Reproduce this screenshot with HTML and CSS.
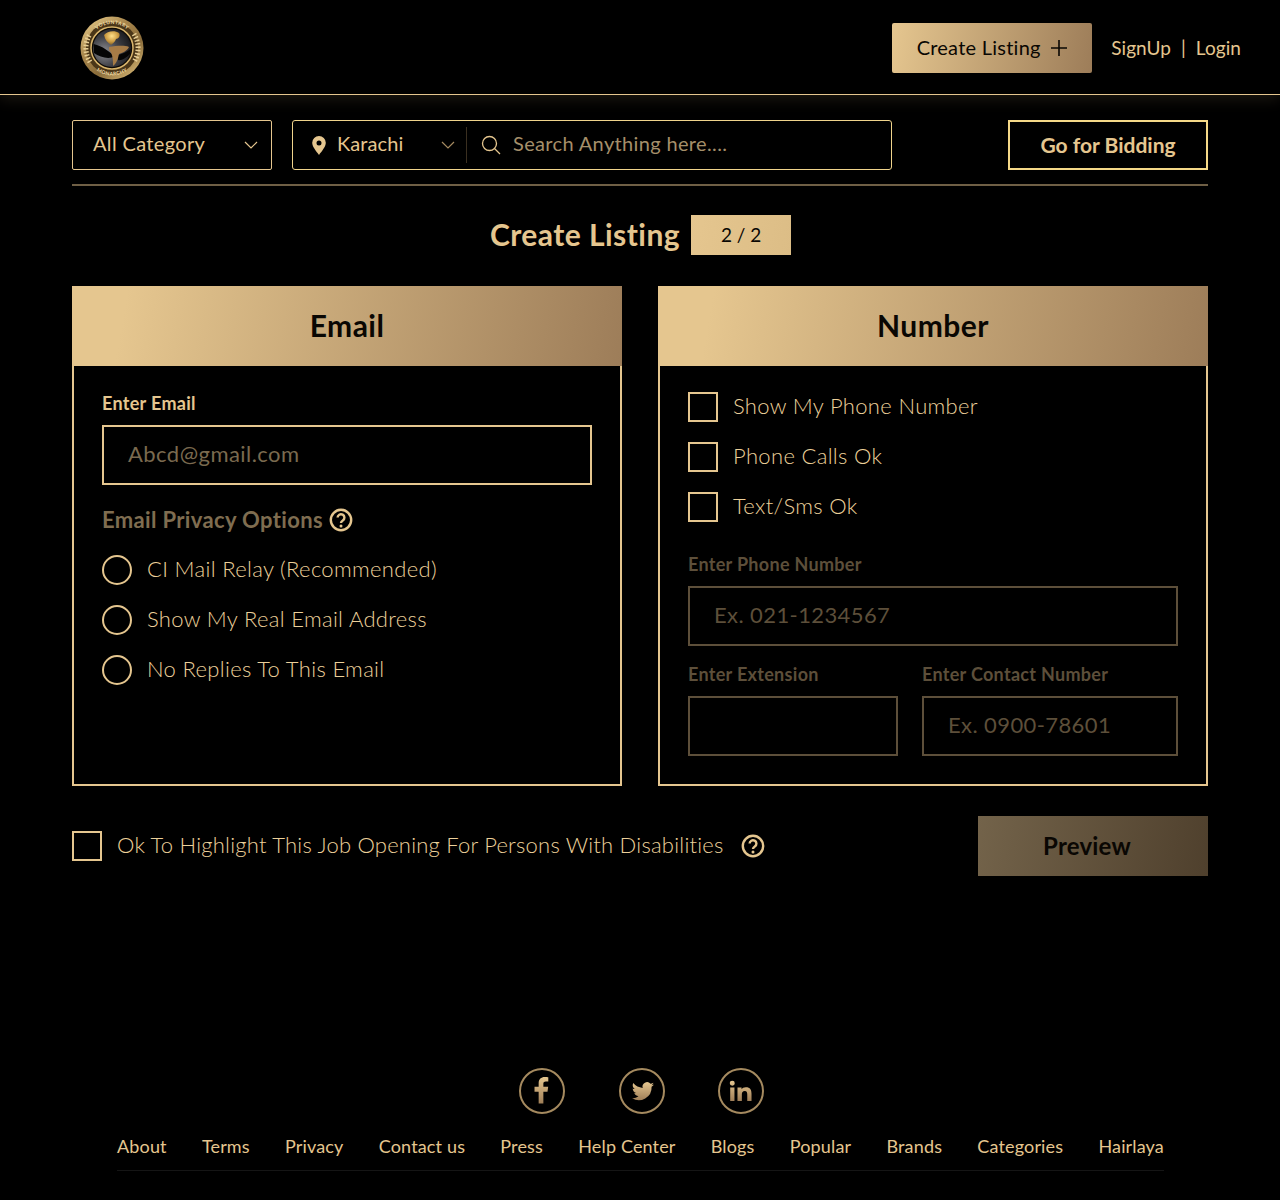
FILE: index.html
```html
<!DOCTYPE html>
<html lang="en">
<head>
    <meta charset="UTF-8">
    <meta name="viewport" content="width=device-width, initial-scale=1.0">
    <title>Create Listing</title>
    <link rel="stylesheet" href="styles.css">
</head>
<body>

    <svg class="svg-defs" width="0" height="0" aria-hidden="true">
        <defs>
            <linearGradient id="goldIcon" x1="0" y1="0" x2="0" y2="1">
                <stop offset="0" stop-color="#e5c68f"/>
                <stop offset="1" stop-color="#a07f58"/>
            </linearGradient>
            <linearGradient id="logoRing" x1="0.1" y1="0" x2="0.9" y2="1">
                <stop offset="0" stop-color="#e8cd8c"/>
                <stop offset="0.35" stop-color="#a8864c"/>
                <stop offset="0.65" stop-color="#8a6c3a"/>
                <stop offset="1" stop-color="#dfc07c"/>
            </linearGradient>
            <radialGradient id="logoGlobe" cx="0.3" cy="0.6" r="0.8">
                <stop offset="0" stop-color="#8c8c90"/>
                <stop offset="0.5" stop-color="#3e3f45"/>
                <stop offset="1" stop-color="#131316"/>
            </radialGradient>
            <radialGradient id="logoLand" cx="0.5" cy="0.35" r="0.7">
                <stop offset="0" stop-color="#ffe08a"/>
                <stop offset="0.6" stop-color="#c9983f"/>
                <stop offset="1" stop-color="#6d5226"/>
            </radialGradient>
            <path id="logoTop" d="M8 32a24 24 0 0 1 48 0"/>
            <path id="logoBottom" d="M4.500 32a27.500 27.500 0 0 0 55 0"/>
        </defs>
    </svg>

    <header class="top-bar">
        <svg class="logo" width="64" height="64" viewBox="0 0 64 64">
            <circle cx="32" cy="32" r="31.500" fill="url(#logoRing)"/>
            <circle cx="32" cy="32" r="26" fill="#4a3618"/>
            <path d="M10 46a26 26 0 0 1 0-28M54 18a26 26 0 0 1 0 28" fill="none" stroke="#e6cd94" stroke-width="5" stroke-dasharray="1.500 1.800"/>
            <text class="logo-text"><textPath href="#logoTop" startOffset="50%" text-anchor="middle">VOLUNTARY</textPath></text>
            <text class="logo-text"><textPath href="#logoBottom" startOffset="50%" text-anchor="middle">MONARCHY</textPath></text>
            <circle cx="32" cy="32" r="21" fill="#0e0a05" stroke="#d9b56c" stroke-width="1.500"/>
            <circle cx="32" cy="32" r="19" fill="url(#logoGlobe)"/>
            <path d="M13.500 28 C23 30 29 36 35 40 C29 44 20 41 14 37 Z" fill="#050505"/>
            <path d="M38 39 C42 38 47 36 50.500 33 L50 38 C46 42 41 45 38 44 Z" fill="#050505"/>
            <path d="M24 19 C27 15 35 14 39 17 C41 20 38 23 36 23 C35 26 33 27 31 29 C28 27 25 24 24 19 Z" fill="url(#logoLand)"/>
            <path d="M29 31 C36 30 44 29 49 31 C47 35 42 37 39 38 C38 43 36 48 33 50 C33 44 33 38 29 34 Z" fill="#a67b46"/>
        </svg>
        <div class="top-actions">
            <a href="#" class="create-btn">
                Create Listing
                <svg width="18" height="18" viewBox="0 0 18 18"><path d="M9 1v16M1 9h16" stroke="#0a0703" stroke-width="1.600" fill="none"/></svg>
            </a>
            <div class="auth-links">
                <a href="#">SignUp</a>
                <span>|</span>
                <a href="#">Login</a>
            </div>
        </div>
    </header>

    <main class="page">
        <div class="search-row">
            <div class="select-box">
                <span>All Category</span>
                <svg class="chevron" width="14" height="8" viewBox="0 0 14 8"><path d="M1 1l6 6 6-6" stroke="#e5c68f" stroke-width="1.200" fill="none"/></svg>
            </div>
            <div class="search-box">
                <svg class="pin" width="14" height="19" viewBox="0 0 14 19"><path fill-rule="evenodd" d="M7 0a6.800 6.800 0 0 1 6.800 6.800C13.800 11 9.500 15.500 7 19 4.500 15.500.2 11 .2 6.800A6.800 6.800 0 0 1 7 0zm0 4.400a2.500 2.500 0 1 0 0 5 2.500 2.500 0 0 0 0-5z" fill="#e5c68f"/></svg>
                <span class="city">Karachi</span>
                <svg class="chevron dim" width="14" height="8" viewBox="0 0 14 8"><path d="M1 1l6 6 6-6" stroke="#a58a60" stroke-width="1.200" fill="none"/></svg>
                <span class="search-divider"></span>
                <svg class="search-icon" width="20" height="20" viewBox="0 0 20 20"><circle cx="8.500" cy="8.500" r="7" stroke="#e5c68f" stroke-width="1.300" fill="none"/><path d="M13.500 13.500l5.500 5.500" stroke="#e5c68f" stroke-width="1.300"/></svg>
                <span class="search-text">Search Anything here....</span>
            </div>
            <a href="#" class="bidding-btn">Go for Bidding</a>
        </div>

        <div class="title-row">
            <h1>Create Listing</h1>
            <span class="step">2 / 2</span>
        </div>

        <div class="cards">
            <section class="card">
                <h2 class="card-head">Email</h2>
                <div class="card-body">
                    <label class="field-label">Enter Email</label>
                    <div class="input">Abcd@gmail.com</div>
                    <div class="privacy-title">
                        Email Privacy Options
                        <svg class="help" width="24" height="24" viewBox="0 0 24 24"><use href="#helpIcon"/></svg>
                    </div>
                    <div class="option"><span class="radio"></span><span class="opt-text">CI Mail Relay (Recommended)</span></div>
                    <div class="option"><span class="radio"></span><span class="opt-text">Show My Real Email Address</span></div>
                    <div class="option"><span class="radio"></span><span class="opt-text">No Replies To This Email</span></div>
                </div>
            </section>

            <section class="card">
                <h2 class="card-head">Number</h2>
                <div class="card-body number-body">
                    <div class="option"><span class="check"></span><span class="opt-text">Show My Phone Number</span></div>
                    <div class="option"><span class="check"></span><span class="opt-text">Phone Calls Ok</span></div>
                    <div class="option"><span class="check"></span><span class="opt-text">Text/Sms Ok</span></div>
                    <div class="disabled-fields">
                        <label class="field-label">Enter Phone Number</label>
                        <div class="input">Ex. 021-1234567</div>
                        <div class="field-pair">
                            <div class="ext-field">
                                <label class="field-label">Enter Extension</label>
                                <div class="input"></div>
                            </div>
                            <div class="contact-field">
                                <label class="field-label">Enter Contact Number</label>
                                <div class="input">Ex. 0900-78601</div>
                            </div>
                        </div>
                    </div>
                </div>
            </section>
        </div>

        <div class="bottom-row">
            <div class="option highlight">
                <span class="check"></span>
                <span class="opt-text">Ok To Highlight This Job Opening For Persons With Disabilities</span>
                <svg class="help" width="24" height="24" viewBox="0 0 24 24">
                    <g id="helpIcon">
                        <circle cx="12" cy="12" r="10.200" stroke="#e5c68f" stroke-width="2.400" fill="none"/>
                        <path d="M8.600 9.600a3.400 3.400 0 1 1 5.200 2.900c-1.200.8-1.800 1.300-1.800 2.500" stroke="#e5c68f" stroke-width="2.400" fill="none"/>
                        <circle cx="12" cy="17.900" r="1.500" fill="#e5c68f"/>
                    </g>
                </svg>
            </div>
            <a href="#" class="preview-btn">Preview</a>
        </div>
    </main>

    <footer class="footer">
        <div class="socials">
            <a href="#" class="social">
                <svg width="46" height="46" viewBox="0 0 46 46"><path transform="translate(-4.200 -3.800) scale(1.120)" d="M25.500 35V24.500h3.700l.6-4.300h-4.300v-2.700c0-1.300.4-2.100 2.200-2.100h2.200v-3.800c-.5-.1-1.800-.2-3.200-.2-3.200 0-5.400 1.900-5.400 5.500v3.300h-3.700v4.300h3.700V35z" fill="url(#goldIcon)"/></svg>
            </a>
            <a href="#" class="social">
                <svg width="46" height="46" viewBox="0 0 46 46"><path transform="translate(1 1)" d="M34 15.500c-.8.400-1.700.6-2.600.7.900-.6 1.700-1.400 2-2.500-.9.500-1.900.9-2.900 1.100a4.500 4.500 0 0 0-7.800 4.100c-3.800-.2-7.100-2-9.400-4.800-1.200 2.100-.6 4.700 1.400 6-.7 0-1.400-.2-2-.6 0 2.200 1.500 4.100 3.600 4.500-.7.200-1.400.2-2 .1.600 1.800 2.300 3.100 4.200 3.100-1.900 1.500-4.200 2.100-6.600 1.900a12.800 12.800 0 0 0 19.700-11.400c.9-.6 1.700-1.400 2.400-2.200z" fill="url(#goldIcon)"/></svg>
            </a>
            <a href="#" class="social">
                <svg width="46" height="46" viewBox="0 0 46 46"><path transform="translate(-0.800 -0.800) scale(1.040)" d="M12.500 19.500h4.100v13h-4.100zM14.500 13a2.400 2.400 0 1 1 0 4.800 2.400 2.400 0 0 1 0-4.800zM19.500 19.500h3.900v1.800c.7-1.200 2.200-2.100 4.200-2.100 4.100 0 5.400 2.500 5.400 6.300v7h-4.100v-6.300c0-1.700-.4-3.400-2.400-3.400s-2.800 1.500-2.800 3.300v6.400h-4.200z" fill="url(#goldIcon)"/></svg>
            </a>
        </div>
        <nav class="footer-links">
            <a href="#">About</a>
            <a href="#">Terms</a>
            <a href="#">Privacy</a>
            <a href="#">Contact us</a>
            <a href="#">Press</a>
            <a href="#">Help Center</a>
            <a href="#">Blogs</a>
            <a href="#">Popular</a>
            <a href="#">Brands</a>
            <a href="#">Categories</a>
            <a href="#">Hairlaya</a>
        </nav>
    </footer>

</body>
</html>
```

FILE: styles.css
```css
/* General Styling */
* {
    box-sizing: border-box;
}

body {
    margin: 0;
    height: 1200px;
    background: #000;
    color: #e5c68f;
    font-family: 'Lato', 'Noto Sans', sans-serif;
    overflow: hidden;
}

a {
    color: inherit;
    text-decoration: none;
}

.svg-defs {
    position: absolute;
}

/* Header */
.top-bar {
    height: 95px;
    padding: 0 39px 0 80px;
    display: flex;
    align-items: center;
    justify-content: space-between;
    border-bottom: 1px solid #e5c68f;
    box-shadow: 0 4px 14px rgba(229, 198, 143, 0.12);
}

.logo {
    margin-top: 1px;
}

.logo-text {
    fill: #f0dca6;
    font-size: 5px;
    font-weight: 700;
    letter-spacing: 0.400px;
}

.top-actions {
    display: flex;
    align-items: center;
    gap: 19px;
    margin-top: 2px;
}

.create-btn {
    width: 200px;
    height: 50px;
    padding-bottom: 2px;
    display: flex;
    align-items: center;
    justify-content: center;
    gap: 9px;
    border-radius: 2px;
    background: linear-gradient(100deg, #e5c68f, #9d7d59);
    color: #0a0703;
    font-size: 20px;
    letter-spacing: 0.250px;
}

.create-btn svg {
    margin-top: 2px;
}

.auth-links {
    padding-bottom: 2px;
    display: flex;
    gap: 10px;
    font-size: 19px;
    letter-spacing: 0.080px;
}

/* Search row */
.page {
    padding: 0 72px;
}

.search-row {
    margin-top: 25px;
    padding-bottom: 14px;
    display: flex;
    border-bottom: 2px solid #6f5f45;
}

.select-box {
    width: 200px;
    height: 50px;
    padding: 0 13px 0 20px;
    display: flex;
    align-items: center;
    justify-content: space-between;
    border: 1px solid #e5c68f;
    border-radius: 2px;
    font-size: 20px;
    letter-spacing: 0.350px;
}

.select-box span,
.search-box span {
    margin-bottom: 4px;
}

.search-box {
    width: 600px;
    height: 50px;
    margin-left: 20px;
    padding-left: 19px;
    display: flex;
    align-items: center;
    border: 1px solid #f0d48c;
    border-radius: 3px;
    font-size: 20px;
}

.city {
    width: 104px;
    margin-left: 11px;
    letter-spacing: 0.100px;
}

.search-box .search-divider {
    width: 1px;
    height: 36px;
    margin: 0 0 0 11px;
    background: #3a2f20;
}

.search-icon {
    margin-left: 14px;
}

.search-text {
    margin-left: 12px;
    color: #a58f6a;
    letter-spacing: 0.350px;
}

.bidding-btn {
    width: 200px;
    height: 50px;
    margin-left: auto;
    padding-bottom: 2px;
    display: flex;
    align-items: center;
    justify-content: center;
    border: 2px solid #f5d988;
    font-size: 21px;
    font-weight: 700;
}

/* Title */
.title-row {
    margin-top: 29px;
    padding-left: 1px;
    display: flex;
    align-items: center;
    justify-content: center;
    gap: 11px;
}

h1 {
    margin: 0 0 2px;
    font-size: 30px;
    font-weight: 700;
    letter-spacing: 0.450px;
}

.step {
    width: 100px;
    height: 40px;
    padding-bottom: 2px;
    display: flex;
    align-items: center;
    justify-content: center;
    background: linear-gradient(100deg, #e5c68f, #dcbd86);
    color: #0a0703;
    font-size: 19px;
}

/* Cards */
.cards {
    margin-top: 31px;
    display: flex;
    justify-content: space-between;
}

.card {
    width: 550px;
    height: 500px;
    border: 2px solid #e5c68f;
    border-top: 0;
}

.card-head {
    height: 80px;
    margin: 0 -2px;
    padding-bottom: 2px;
    display: flex;
    align-items: center;
    justify-content: center;
    background: linear-gradient(100deg, #e5c68f 10%, #9d7d59);
    color: #0a0703;
    font-size: 30px;
    font-weight: 700;
    letter-spacing: 0.450px;
}

.card-body {
    padding: 25px 28px;
}

.field-label {
    display: block;
    font-size: 18px;
    font-weight: 700;
    line-height: 24px;
    letter-spacing: 0.300px;
}

.input {
    height: 60px;
    margin-top: 10px;
    padding: 0 24px 3px;
    display: flex;
    align-items: center;
    border: 2px solid #e5c68f;
    color: #7a6a4f;
    font-size: 22px;
    letter-spacing: 0.450px;
}

.privacy-title {
    margin-top: 20px;
    margin-bottom: 10px;
    display: flex;
    align-items: center;
    gap: 6px;
    color: #7f6d50;
    font-size: 22px;
    font-weight: 700;
    line-height: 30px;
    letter-spacing: 0.350px;
}

.option {
    height: 50px;
    display: flex;
    align-items: center;
    font-size: 22px;
}

.opt-text {
    margin-bottom: 3px;
    color: #ecd09a;
    font-weight: 300;
    letter-spacing: 0.330px;
}

.highlight .opt-text {
    letter-spacing: 0.220px;
}

.radio {
    width: 30px;
    height: 30px;
    margin-right: 15px;
    border: 2px solid #e5c68f;
    border-radius: 50%;
}

.check {
    width: 30px;
    height: 30px;
    margin-right: 15px;
    border: 2px solid #e5c68f;
}

.number-body {
    padding-top: 16px;
}

.disabled-fields {
    margin-top: 20px;
    color: #5d4f3a;
}

.disabled-fields .input {
    border-color: #5d4f3a;
    color: #5d4f3a;
    letter-spacing: 0.400px;
}

.field-pair {
    margin-top: 16px;
    display: flex;
    gap: 24px;
}

.ext-field {
    width: 210px;
}

.contact-field {
    width: 256px;
}

/* Bottom row */
.bottom-row {
    margin-top: 30px;
    display: flex;
    align-items: center;
    justify-content: space-between;
}

.highlight .help {
    margin-left: 17px;
}

.preview-btn {
    width: 230px;
    height: 60px;
    padding: 0 12px 2px 0;
    display: flex;
    align-items: center;
    justify-content: center;
    background: linear-gradient(100deg, #73634a, #4f402d);
    color: #0a0703;
    font-size: 24px;
    font-weight: 700;
    letter-spacing: 0.200px;
}

/* Footer */
.footer {
    margin-top: 192px;
    padding: 0 116px 0 117px;
}

.socials {
    display: flex;
    justify-content: center;
    gap: 53px;
    margin-right: -2px;
}

.social {
    width: 46px;
    height: 46px;
    border: 2px solid #a58a5f;
    border-radius: 50%;
    display: flex;
    align-items: center;
    justify-content: center;
}

.social:first-child {
    margin-right: 1px;
}

.social svg {
    flex: none;
}

.footer-links {
    margin-top: 21px;
    padding-bottom: 13px;
    display: flex;
    justify-content: space-between;
    border-bottom: 1px solid #151515;
    font-size: 18px;
    letter-spacing: 0.150px;
}
```
